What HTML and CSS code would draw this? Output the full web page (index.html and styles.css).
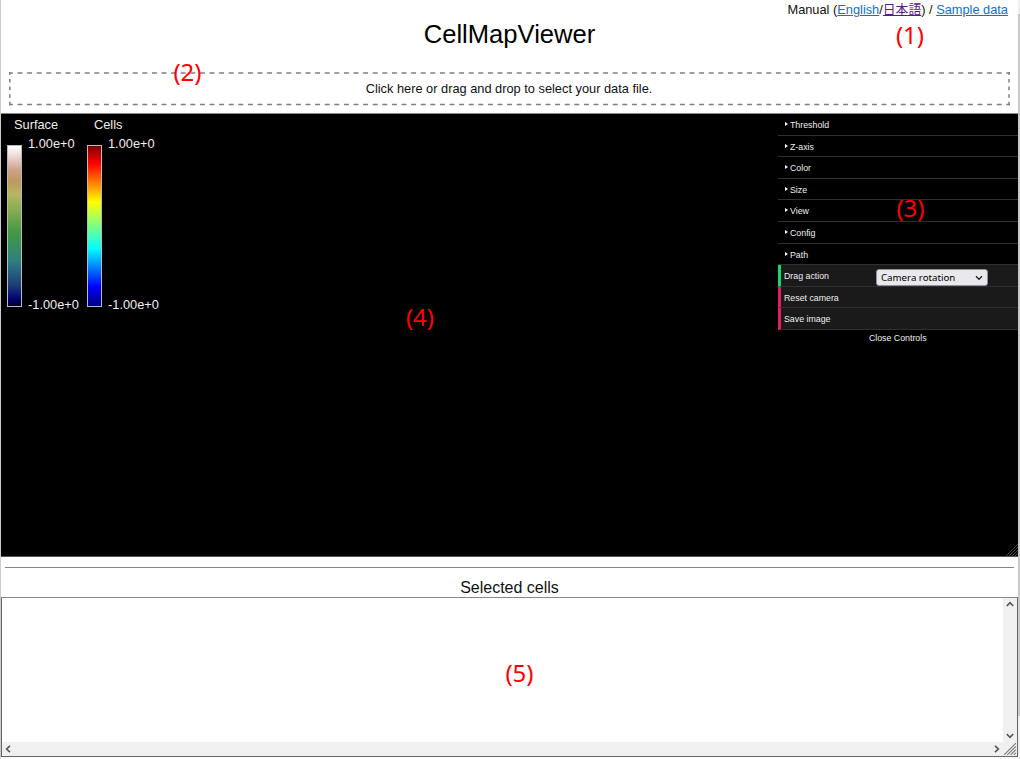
FILE: index.html
```html
<!DOCTYPE html>
<html lang="en">
<head>
<meta charset="utf-8">
<title>CellMapViewer</title>
<link rel="stylesheet" href="styles.css">
</head>
<body>
<div class="page">
  <nav class="manual">Manual (<a href="#">English</a>/<a class="visited" href="#">日本語</a>) / <a href="#">Sample data</a></nav>
  <h1 class="title">CellMapViewer</h1>
  <div class="drop">
    <svg class="dash" width="1002" height="34" viewBox="0 0 1002 34" fill="none" stroke="#808080" stroke-width="1.5">
      <path d="M0 .9H1001M0 32.6H1001" stroke-dasharray="5 4.6" stroke-dashoffset="1.1"/>
      <path d="M.8 0V33.3M1000 0V33.3" stroke-dasharray="3.6 4" stroke-dashoffset="0.6"/>
    </svg>
    <span>Click here or drag and drop to select your data file.</span>
  </div>
  <main class="viewer">
    <div class="legends">
      <section class="legend">
        <h2>Surface</h2>
        <div class="scale"><div class="bar earth"></div><div class="range"><span>1.00e+0</span><span>-1.00e+0</span></div></div>
      </section>
      <section class="legend">
        <h2>Cells</h2>
        <div class="scale"><div class="bar jet"></div><div class="range"><span>1.00e+0</span><span>-1.00e+0</span></div></div>
      </section>
    </div>
    <aside class="gui">
      <div class="folder">Threshold</div>
      <div class="folder">Z-axis</div>
      <div class="folder">Color</div>
      <div class="folder">Size</div>
      <div class="folder">View</div>
      <div class="folder">Config</div>
      <div class="folder">Path</div>
      <div class="control option"><span class="name">Drag action</span>
        <div class="select"><span>Camera rotation</span><svg width="8" height="6" viewBox="0 0 8 6" fill="none" stroke="#222" stroke-width="1.3"><path d="M1 1.2L4 4.3L7 1.2"/></svg></div>
      </div>
      <div class="control action">Reset camera</div>
      <div class="control action">Save image</div>
      <div class="close">Close Controls</div>
    </aside>
    <svg class="grip" width="12" height="12" viewBox="0 0 12 12" stroke="#555" stroke-width=".8"><path d="M0 12L12 0M3 12L12 3M6 12L12 6M9 12L12 9"/></svg>
  </main>
  <hr class="rule">
  <h2 class="selected">Selected cells</h2>
  <div class="textarea">
    <div class="content"></div>
    <div class="vbar">
      <svg width="8" height="6" viewBox="0 0 8 6"><path d="M.8 5L4 1.6L7.2 5"/></svg>
      <svg width="8" height="6" viewBox="0 0 8 6"><path d="M.8 1L4 4.4L7.2 1"/></svg>
    </div>
    <div class="hbar">
      <svg width="6" height="8" viewBox="0 0 6 8"><path d="M5 .8L1.6 4L5 7.2"/></svg>
      <svg width="6" height="8" viewBox="0 0 6 8"><path d="M1 .8L4.4 4L1 7.2"/></svg>
    </div>
    <svg class="corner" width="13" height="13" viewBox="0 0 13 13"><path d="M1 12L12 1M4 12L12 4M7 12L12 7M10 12L12 10"/></svg>
  </div>
</div>
<div class="scrollbar"><div class="thumb"></div></div>
<div class="note n1">(1)</div>
<div class="note n2">(2)</div>
<div class="note n3">(3)</div>
<div class="note n4">(4)</div>
<div class="note n5">(5)</div>
</body>
</html>
```
FILE: styles.css
```css
* { box-sizing: border-box; }
body {
  margin: 0;
  width: 1020px;
  height: 759px;
  overflow: hidden;
  position: relative;
  display: flex;
  background: #fff;
  color: #111;
  font-family: "Liberation Sans", "Noto Sans CJK JP", sans-serif;
}
h1, h2 { margin: 0; font-weight: 400; }
.page { width: 1018px; border-left: 1px solid #ccc; display: flex; flex-direction: column; }
.manual { height: 18px; line-height: 19px; padding-right: 10px; text-align: right; font-size: 12.8px; white-space: nowrap; }
.manual a { color: #1470cc; text-decoration: underline; }
.manual a.visited { color: #551a8b; }
.title { height: 54px; line-height: 33px; font-size: 25.6px; text-align: center; color: #000; }
.drop { position: relative; width: 1002px; height: 34px; margin-left: 8px; line-height: 34px; font-size: 12.8px; text-align: center; padding-right: 2px; }
.dash { position: absolute; left: 0; top: 0; }
.viewer { position: relative; height: 444px; margin-top: 7px; border-top: 1px solid #888; border-bottom: 1px solid #555; background: #000; display: flex; justify-content: space-between; }
.legends { display: flex; padding: 3px 0 0 6px; color: #eee; font-size: 12.8px; }
.legend { width: 80px; }
.legend h2 { font-size: 12.8px; line-height: 16px; padding-left: 7px; }
.scale { display: flex; height: 171px; }
.bar { width: 15px; height: 162px; margin-top: 12px; border: 1px solid #bbb; }
.earth { background: linear-gradient(#fff 0%, #eedbd9 6%, #d0a18c 15%, #bc9a60 22%, #b8b860 30%, #449944 54%, #2d8080 72%, #1d3d78 87%, #000070 96%, #000025 100%); }
.jet { background: linear-gradient(#800000 0%, #f00 11%, #ff0 35%, #0ff 64%, #00f 88%, #000080 100%); }
.range { display: flex; flex-direction: column; justify-content: space-between; padding: 3px 0 0 6px; line-height: 16px; white-space: nowrap; margin-bottom: -9px; }
.gui { width: 240.5px; font-size: 8.8px; color: #eee; }
.folder { height: 21.6px; line-height: 22px; border-bottom: 1px solid #303030; padding-left: 12.5px; position: relative; }
.folder::before { content: ""; position: absolute; left: 7px; top: 8px; border-left: 3px solid #fff; border-top: 2px solid transparent; border-bottom: 2px solid transparent; }
.control { height: 21.6px; line-height: 22px; background: #1a1a1a; border-bottom: 1px solid #303030; border-left: 3px solid #e61d5f; padding-left: 3.5px; display: flex; }
.option { border-left-color: #1ed36f; }
.name { width: 92px; }
.select { width: 112px; height: 17px; margin-top: 4px; background: #e9e9ed; border: 1px solid #8f8f9d; border-radius: 3px; color: #000; display: flex; align-items: center; justify-content: space-between; padding: 0 4px; font-family: "Noto Sans", sans-serif; font-size: 9.7px; line-height: 15px; }
.close { height: 16px; line-height: 17px; text-align: center; }
.grip { position: absolute; right: 0; bottom: 0; }
.rule { width: 1009px; height: 1px; margin: 10px 0 0 4px; border: 0; background: #888; }
.selected { height: 29px; line-height: 39px; font-size: 16px; text-align: center; }
.textarea { height: 160px; border: 1px solid #666; border-top-color: #888; display: grid; grid-template-columns: 1fr 14px; grid-template-rows: 1fr 14px; }
.textarea svg { fill: none; stroke: #555; stroke-width: 1.6; }
.vbar, .hbar { background: #f0f0f0; display: flex; align-items: center; justify-content: space-between; }
.vbar { flex-direction: column; padding: 3px 0; }
.hbar { padding: 0 3px; }
.textarea .corner { stroke: #777; stroke-width: 1; background: #f0f0f0; width: 14px; height: 14px; }
.scrollbar { width: 2px; background: #f0f0f0; }
.thumb { height: 702px; margin-top: 14px; background: #c9c9c9; }
.note { position: absolute; color: #f00; font-family: "Noto Sans", sans-serif; font-size: 24px; line-height: 30px; width: 40px; text-align: center; }
.n1 { left: 890px; top: 20px; }
.n2 { left: 167.5px; top: 57px; }
.n3 { left: 890.5px; top: 193px; }
.n4 { left: 400px; top: 302px; }
.n5 { left: 499.5px; top: 658px; }
```
